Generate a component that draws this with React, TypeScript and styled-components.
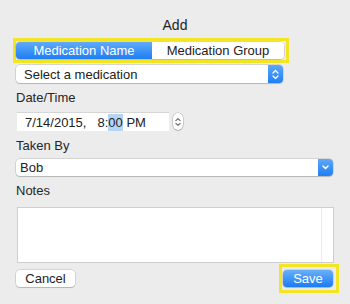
import React from "react";
import styled, { createGlobalStyle } from "styled-components";

const Global = createGlobalStyle`
  html, body { margin: 0; padding: 0; background: #ececec; }
  body { font-family: "Liberation Sans", Arial, sans-serif; color: #222; }
  * { box-sizing: border-box; }
`;

const Dialog = styled.div`
  width: 350px;
  height: 304px;
  padding: 17px 16px 0 16px;
  display: flex;
  flex-direction: column;
  background: #ececec;
  overflow: hidden;
`;

const Title = styled.div`
  font-size: 14px;
  line-height: 16px;
  text-align: center;
  color: #1e1e1e;
`;

const Highlight = styled.div<{ $pad: string }>`
  border: 3px solid #f3e424;
  padding: ${(p) => p.$pad};
  display: flex;
`;

const SegFrame = styled(Highlight)`
  align-self: flex-start;
  margin: 5px 0 0 -3px;
`;

const Segmented = styled.div`
  display: flex;
  height: 17px;
  width: 268px;
  border-radius: 4px;
  overflow: hidden;
  background: #fff;
  box-shadow: 0 0 0 0.5px rgba(0, 0, 0, 0.18), 0 1px 1px rgba(0, 0, 0, 0.12);
`;

const Segment = styled.div<{ $active?: boolean; $w: number }>`
  width: ${(p) => p.$w}px;
  display: flex;
  align-items: center;
  justify-content: center;
  font-size: 13px;
  color: ${(p) => (p.$active ? "#fff" : "#222")};
  background: ${(p) => (p.$active ? "linear-gradient(#62aaf9, #1d7ef3)" : "#fff")};
`;

const Popup = styled.div<{ $w: number; $h: number; $mt: number }>`
  width: ${(p) => p.$w}px;
  height: ${(p) => p.$h}px;
  margin-top: ${(p) => p.$mt}px;
  display: flex;
  align-items: center;
  background: #fff;
  border-radius: 4px;
  box-shadow: 0 0 0 0.5px rgba(0, 0, 0, 0.2), 0 1px 1px rgba(0, 0, 0, 0.15);
  font-size: 13px;
`;

const PopupText = styled.span<{ $pl: number }>`
  flex: 1;
  padding-left: ${(p) => p.$pl}px;
  color: #222;
`;

const BlueCap = styled.div`
  width: 15px;
  height: 100%;
  display: flex;
  align-items: center;
  justify-content: center;
  background: linear-gradient(#5ea8f8, #1f7ff3);
  border-radius: 0 4px 4px 0;
`;

const Label = styled.div<{ $mt: number }>`
  margin-top: ${(p) => p.$mt}px;
  font-size: 13px;
  line-height: 15px;
  color: #262626;
`;

const DateRow = styled.div`
  display: flex;
  align-items: center;
  margin: 7px 0 0 1px;
`;

const DateField = styled.div`
  width: 152px;
  height: 19px;
  background: #fff;
  border-top: 1px solid #d6d6d6;
  display: flex;
  align-items: center;
  font-size: 13px;
  padding-left: 8px;
  color: #222;
`;

const Gap = styled.span<{ $w: number }>`
  display: inline-block;
  width: ${(p) => p.$w}px;
`;

const Selected = styled.span`
  background: #b5d5f8;
  padding: 1px 0;
`;

const Stepper = styled.div`
  width: 10px;
  height: 17px;
  margin-left: 4px;
  background: #fff;
  border-radius: 5px;
  box-shadow: 0 0 0 0.5px rgba(0, 0, 0, 0.25), 0 1px 1px rgba(0, 0, 0, 0.12);
  display: flex;
  align-items: center;
  justify-content: center;
`;

const Notes = styled.div`
  margin: 9px 0 0 1px;
  width: 317px;
  height: 56px;
  background: #fff;
  border: 1px solid #cfcfcf;
  display: flex;
  justify-content: flex-end;
`;

const ScrollTrack = styled.div`
  width: 12px;
  border-left: 1px solid #ececec;
`;

const Footer = styled.div`
  margin: 1px -5px 0 0;
  display: flex;
  align-items: center;
  justify-content: space-between;
`;

const Button = styled.div<{ $primary?: boolean; $w: number }>`
  width: ${(p) => p.$w}px;
  height: 17px;
  border-radius: 4px;
  display: flex;
  align-items: center;
  justify-content: center;
  font-size: 13px;
  color: ${(p) => (p.$primary ? "#fff" : "#222")};
  background: ${(p) => (p.$primary ? "linear-gradient(#69affa, #1b7cf2)" : "#fff")};
  box-shadow: 0 0 0 0.5px rgba(0, 0, 0, 0.2), 0 1px 1px rgba(0, 0, 0, 0.15);
`;

const UpDown = ({ color, w = 7, h = 11 }: { color: string; w?: number; h?: number }) => (
  <svg width={w} height={h} viewBox="0 0 7 11" fill="none" stroke={color} strokeWidth="1.3" strokeLinecap="round" strokeLinejoin="round">
    <path d="M1 4 L3.5 1.5 L6 4" />
    <path d="M1 7 L3.5 9.5 L6 7" />
  </svg>
);

const Chevron = () => (
  <svg width="7" height="5" viewBox="0 0 7 5" fill="none" stroke="#fff" strokeWidth="1.5" strokeLinecap="round" strokeLinejoin="round">
    <path d="M1 1 L3.5 3.5 L6 1" />
  </svg>
);

export default function App() {
  return (
    <>
      <Global />
      <Dialog>
        <Title>Add</Title>
        <SegFrame $pad="1px 2px 1px 0">
          <Segmented>
            <Segment $active $w={136}>Medication Name</Segment>
            <Segment $w={132}>Medication Group</Segment>
          </Segmented>
        </SegFrame>
        <Popup $w={267} $h={18} $mt={2}>
          <PopupText $pl={8}>Select a medication</PopupText>
          <BlueCap>
            <UpDown color="#fff" />
          </BlueCap>
        </Popup>
        <Label $mt={7}>Date/Time</Label>
        <DateRow>
          <DateField>
            7/14/2015,<Gap $w={11} />8:<Selected>00</Selected>&nbsp;PM
          </DateField>
          <Stepper>
            <UpDown color="#666" w={6} h={10} />
          </Stepper>
        </DateRow>
        <Label $mt={7}>Taken By</Label>
        <Popup $w={317} $h={17} $mt={6}>
          <PopupText $pl={4}>Bob</PopupText>
          <BlueCap>
            <Chevron />
          </BlueCap>
        </Popup>
        <Label $mt={7}>Notes</Label>
        <Notes>
          <ScrollTrack />
        </Notes>
        <Footer>
          <Button $w={59}>Cancel</Button>
          <Highlight $pad="3px 3px 3px 1px">
            <Button $primary $w={50}>Save</Button>
          </Highlight>
        </Footer>
      </Dialog>
    </>
  );
}
